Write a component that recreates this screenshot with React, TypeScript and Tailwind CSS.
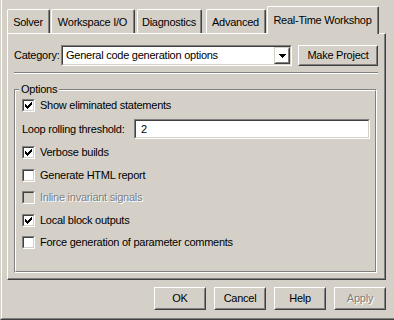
import React from "react";

const tabs = [
  { label: "Solver", cls: "w-[43px] ml-0" },
  { label: "Workspace I/O", cls: "w-[84px] ml-[1px]" },
  { label: "Diagnostics", cls: "w-[65px] ml-[2px]" },
  { label: "Advanced", cls: "w-[60px] ml-[4px]" },
];

const options = [
  { label: "Verbose builds", checked: true, cls: "mt-[7px]" },
  { label: "Generate HTML report", checked: false, cls: "mt-[10px]" },
  { label: "Inline invariant signals", checked: false, disabled: true, cls: "mt-[9px]" },
  { label: "Local block outputs", checked: true, cls: "mt-[10px]" },
  { label: "Force generation of parameter comments", checked: false, cls: "mt-[9px]" },
];

const checkRows = [[6, 1], [5, 2], [0, 1, 4, 3], [0, 2, 3, 3], [0, 5], [1, 3], [2, 1]];

function CheckMark() {
  return (
    <svg width="7" height="7" viewBox="0 0 7 7" shapeRendering="crispEdges">
      {checkRows.map((row, y) =>
        row
          .reduce<number[][]>((acc, v, i) => (i % 2 === 0 ? [...acc, [v, row[i + 1]]] : acc), [])
          .map(([x, w], i) => <rect key={`${y}-${i}`} x={x} y={y} width={w} height={1} fill="#000" />)
      )}
    </svg>
  );
}

function CheckBox({ checked, disabled }: { checked?: boolean; disabled?: boolean }) {
  return (
    <div className="w-[13px] h-[13px] shrink-0 border border-t-[#808080] border-l-[#808080] border-r-white border-b-white">
      <div
        className={`w-full h-full flex items-center justify-center border border-t-[#404040] border-l-[#404040] border-r-[#d4d0c8] border-b-[#d4d0c8] ${
          disabled ? "bg-[#d4d0c8]" : "bg-white"
        }`}
      >
        {checked && <CheckMark />}
      </div>
    </div>
  );
}

function Button({ label, disabled, cls }: { label: string; disabled?: boolean; cls: string }) {
  return (
    <div className={`border border-t-white border-l-white border-r-[#404040] border-b-[#404040] ${cls}`}>
      <div className="w-full h-full flex items-center justify-center border border-t-[#d4d0c8] border-l-[#d4d0c8] border-r-[#808080] border-b-[#808080]">
        <span className={disabled ? "text-[#808080] [text-shadow:1px_1px_0_#fff]" : ""}>{label}</span>
      </div>
    </div>
  );
}

function Sunken({ cls, children }: { cls: string; children?: React.ReactNode }) {
  return (
    <div className={`border border-t-[#808080] border-l-[#808080] border-r-white border-b-white ${cls}`}>
      <div className="w-full h-full flex items-center bg-white border border-t-[#404040] border-l-[#404040] border-r-[#d4d0c8] border-b-[#d4d0c8]">
        {children}
      </div>
    </div>
  );
}

export default function App() {
  return (
    <div className="w-[394px] h-[320px] bg-[#d4d0c8] text-black text-[11px] leading-[13px] tracking-[-0.25px] font-['Liberation_Sans',Arial,sans-serif] border-l border-b border-l-[#d4d0c8] border-b-[#404040]">
      <div className="h-full flex flex-col border-l border-b border-l-white border-b-[#808080]">
        {/* tab strip */}
        <div className="h-[33px] pl-[5px] flex items-end">
          {tabs.map((t) => (
            <div
              key={t.label}
              className={`h-[24px] rounded-t-[2px] border-t border-l border-r border-t-white border-l-white border-r-[#404040] ${t.cls}`}
            >
              <div className="h-full flex items-center justify-center pt-[1px] border-r border-r-[#808080]">{t.label}</div>
            </div>
          ))}
          <div className="relative z-10 -mb-[1px] ml-[1px] w-[112px] h-[28px] bg-[#d4d0c8] rounded-t-[2px] border-t border-l border-r border-t-white border-l-white border-r-[#404040]">
            <div className="h-full flex justify-center pt-[7px] border-r border-r-[#808080]">Real-Time Workshop</div>
          </div>
        </div>

        {/* tab page */}
        <div className="ml-[5px] w-[379px] h-[247px] border border-t-white border-l-white border-r-[#404040] border-b-[#404040]">
          <div className="h-full flex flex-col border-r border-b border-r-[#808080] border-b-[#808080]">
            <div className="mt-[11px] pl-[6px] flex items-center">
              <span className="w-[47px]">Category:</span>
              <Sunken cls="w-[231px] h-[21px]">
                <span className="flex-1 pl-[3px]">General code generation options</span>
                <div className="w-[16px] h-[17px] border border-t-[#d4d0c8] border-l-[#d4d0c8] border-r-[#404040] border-b-[#404040]">
                  <div className="w-full h-full flex items-center justify-center border border-t-white border-l-white border-r-[#808080] border-b-[#808080]">
                    <svg width="7" height="4" viewBox="0 0 7 4" shapeRendering="crispEdges">
                      <rect x="0" y="0" width="7" height="1" fill="#000" />
                      <rect x="1" y="1" width="5" height="1" fill="#000" />
                      <rect x="2" y="2" width="3" height="1" fill="#000" />
                      <rect x="3" y="3" width="1" height="1" fill="#000" />
                    </svg>
                  </div>
                </div>
              </Sunken>
              <Button label="Make Project" cls="ml-[6px] w-[80px] h-[21px]" />
            </div>

            <div className="mt-[6px] ml-[6px] w-[364px] border-t border-b border-t-[#808080] border-b-white" />

            {/* Options group */}
            <div className="relative mt-[15px] ml-[6px] w-[363px] h-[184px] border border-t-[#808080] border-l-[#808080] border-r-white border-b-white">
              <span className="absolute -top-[7px] left-[4px] px-[2px] bg-[#d4d0c8]">Options</span>
              <div className="h-full flex flex-col pl-[6px] border border-t-white border-l-white border-r-[#808080] border-b-[#808080]">
                <div className="mt-[8px] flex items-center gap-[5px]">
                  <CheckBox checked />
                  <span>Show eliminated statements</span>
                </div>
                <div className="mt-[7px] flex items-center">
                  <span className="w-[112px]">Loop rolling threshold:</span>
                  <Sunken cls="w-[236px] h-[20px]">
                    <span className="pl-[5px]">2</span>
                  </Sunken>
                </div>
                {options.map((o) => (
                  <div key={o.label} className={`flex items-center gap-[5px] ${o.cls}`}>
                    <CheckBox checked={o.checked} disabled={o.disabled} />
                    <span className={o.disabled ? "text-[#808080] [text-shadow:1px_1px_0_#fff]" : ""}>{o.label}</span>
                  </div>
                ))}
              </div>
            </div>
          </div>
        </div>

        {/* dialog buttons */}
        <div className="mt-[7px] pr-[8px] flex justify-end gap-[8px]">
          <Button label="OK" cls="w-[52px] h-[23px]" />
          <Button label="Cancel" cls="w-[52px] h-[23px]" />
          <Button label="Help" cls="w-[52px] h-[23px]" />
          <Button label="Apply" disabled cls="w-[52px] h-[23px]" />
        </div>
      </div>
    </div>
  );
}
